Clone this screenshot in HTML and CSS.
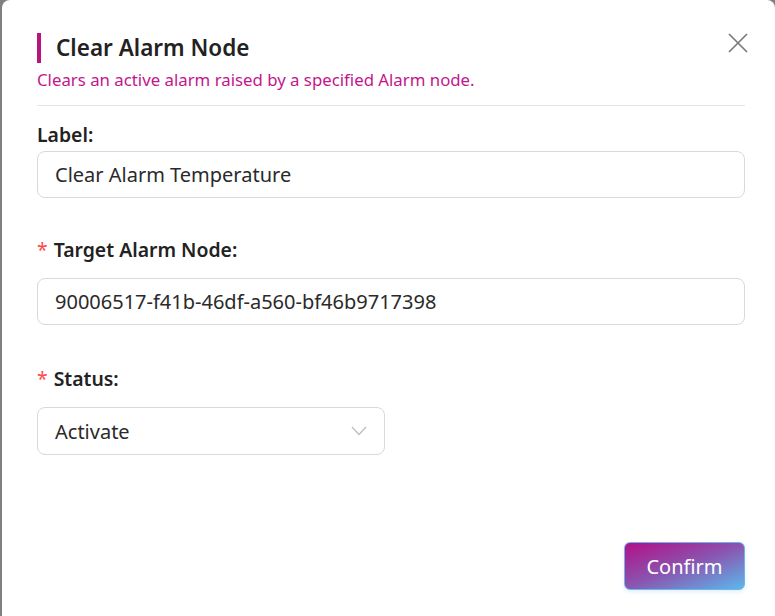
FILE: index.html
```html
<!DOCTYPE html>
<html lang="en">
<head>
  <meta charset="UTF-8">
  <meta name="viewport" content="width=device-width, initial-scale=1">
  <title>Clear Alarm Node</title>
  <link rel="stylesheet" href="styles.css">
</head>
<body>
  <div class="modal">
    <div class="modal-head">
      <h2 class="modal-title">Clear Alarm Node</h2>
      <p class="modal-desc">Clears an active alarm raised by a specified Alarm node.</p>
      <button class="close-btn" aria-label="Close">
        <svg width="20" height="20" viewBox="0 0 20 20">
          <path d="M1 1L19 19M19 1L1 19" stroke="#7a7a7a" stroke-width="1.7" fill="none"/>
        </svg>
      </button>
    </div>

    <form class="node-form" onsubmit="return false">
      <div class="field">
        <label for="label">Label:</label>
        <input type="text" id="label" value="Clear Alarm Temperature">
      </div>

      <div class="field">
        <label for="target" class="required">Target Alarm Node:</label>
        <input type="text" id="target" value="90006517-f41b-46df-a560-bf46b9717398">
      </div>

      <div class="field">
        <label class="required">Status:</label>
        <div class="select">
          <span>Activate</span>
          <svg width="16" height="10" viewBox="0 0 16 10">
            <path d="M1 1L8 8.5L15 1" stroke="#bdbdbd" stroke-width="1.3" fill="none"/>
          </svg>
        </div>
      </div>

      <div class="actions">
        <button class="confirm-btn">Confirm</button>
      </div>
    </form>
  </div>
</body>
</html>
```

FILE: styles.css
```css
* { box-sizing: border-box; }
body {
  margin: 0;
  background: #808080;
  font-family: 'Segoe UI', 'Noto Sans', sans-serif;
  color: #222;
  overflow: hidden;
}
.modal {
  margin-left: 2px;
  width: 773px;
  height: 640px;
  background: #fff;
  border-radius: 8px;
  padding: 33px 30px 0 35px;
}
.modal-head {
  position: relative;
  border-bottom: 1px solid #e4e4e4;
  padding-bottom: 14px;
}
.modal-title {
  margin: 0;
  font-size: 22.5px;
  font-weight: 600;
  line-height: 30px;
  padding-left: 15px;
  border-left: 4px solid #b8137f;
}
.modal-desc {
  margin: 6px 0 0;
  font-size: 16.8px;
  line-height: 22px;
  color: #c4168b;
}
.close-btn {
  position: absolute;
  top: 0;
  right: -3px;
  background: none;
  border: none;
  padding: 0;
  cursor: pointer;
}
.node-form {
  padding-top: 17px;
}
.field {
  margin-bottom: 40px;
}
.field + .field {
  margin-bottom: 42px;
}
.field label {
  display: block;
  font-size: 19.4px;
  font-weight: 600;
  line-height: 24px;
  margin-bottom: 4px;
}
.field label.required {
  margin-bottom: 16px;
}
.required::before {
  content: '*';
  color: #ff4d4f;
  font-weight: 400;
  margin-right: 6px;
}
input[type="text"] {
  width: 100%;
  height: 47px;
  border: 1px solid #d9d9d9;
  border-radius: 8px;
  padding: 0 17px;
  font: inherit;
  font-size: 20px;
  color: #2a2a2a;
}
.select {
  width: 348px;
  height: 48px;
  border: 1px solid #d9d9d9;
  border-radius: 8px;
  padding: 0 17px;
  display: flex;
  align-items: center;
  justify-content: space-between;
  font-size: 20px;
  color: #2a2a2a;
}
.actions {
  display: flex;
  justify-content: flex-end;
  margin-top: 87px;
}
.confirm-btn {
  width: 121px;
  height: 48px;
  border: 1px solid #6fb6e6;
  border-radius: 6px;
  background: linear-gradient(160deg, #b20f88 0%, #8a55b0 50%, #5bb9ec 100%);
  color: #fff;
  font: inherit;
  font-size: 20px;
  cursor: pointer;
  box-shadow: 0 2px 4px rgba(130, 190, 240, 0.25);
}
```
